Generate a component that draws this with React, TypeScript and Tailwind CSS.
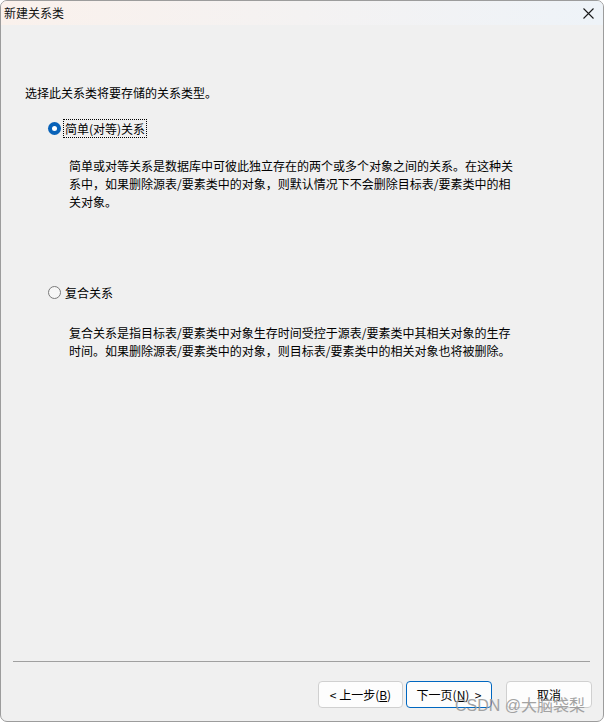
import React from "react";

const font = { fontFamily: '"Noto Sans CJK SC", "Microsoft YaHei", sans-serif' };

export default function App() {
  return (
    <div className="w-[605px] h-[723px] bg-white relative" style={font}>
      <div className="w-[604px] h-[722px] border border-[#9c9c9c] rounded-[7px] bg-[#f0f0f0] flex flex-col overflow-hidden text-[12px] text-black">
        {/* title bar */}
        <div className="h-[24px] shrink-0 flex items-center justify-between pl-[3px] pr-[9px] bg-gradient-to-r from-[#faf1ec] to-[#eef3f8]">
          <span className="leading-[14px] text-[12px] text-[#111]">新建关系类</span>
          <svg width="11" height="11" viewBox="0 0 11 11">
            <path d="M0.5 0.5 L10.5 10.5 M10.5 0.5 L0.5 10.5" stroke="#1a1a1a" strokeWidth="1.1" />
          </svg>
        </div>

        {/* body */}
        <div className="flex-1 flex flex-col">
          <div className="pl-[24px] mt-[59px] leading-[18px]">选择此关系类将要存储的关系类型。</div>

          <div className="flex items-center pl-[47px] mt-[16px] h-[20px]">
            <div className="w-[13px] h-[13px] rounded-full bg-[#0862b8] flex items-center justify-center">
              <div className="w-[5px] h-[5px] rounded-full bg-white" />
            </div>
            <div className="ml-[2px] border border-dotted border-black px-[1px] leading-[17px]">简单(对等)关系</div>
          </div>

          <div className="pl-[68px] mt-[19px] w-[520px] leading-[18px]">
            简单或对等关系是数据库中可彼此独立存在的两个或多个对象之间的关系。在这种关系中，如果删除源表/要素类中的对象，则默认情况下不会删除目标表/要素类中的相关对象。
          </div>

          <div className="flex items-center pl-[47px] mt-[71px] h-[20px]">
            <div className="w-[13px] h-[13px] rounded-full border border-[#7a7a7a] bg-[#f6f6f6]" />
            <div className="ml-[3px] px-[1px] leading-[17px]">复合关系</div>
          </div>

          <div className="pl-[68px] mt-[22px] w-[520px] leading-[18px]">
            复合关系是指目标表/要素类中对象生存时间受控于源表/要素类中其相关对象的生存时间。如果删除源表/要素类中的对象，则目标表/要素类中的相关对象也将被删除。
          </div>
        </div>

        {/* footer */}
        <div className="shrink-0">
          <div className="ml-[12px] w-[577px] h-px bg-[#a0a0a0]" />
          <div className="flex justify-end pr-[11px] mt-[19px] mb-[13px]">
            <button className="w-[85px] h-[27px] rounded-[4px] border border-[#d0d0d0] bg-[#fdfdfd] flex items-center justify-center leading-none whitespace-pre">
              {"< 上一步("}<span className="underline">B</span>{")"}
            </button>
            <button className="ml-[3px] w-[86px] h-[27px] rounded-[4px] border border-[#0067c0] bg-[#fdfdfd] flex items-center justify-center leading-none whitespace-pre">
              {"下一页("}<span className="underline">N</span>{")  >"}
            </button>
            <button className="ml-[14px] w-[86px] h-[27px] rounded-[4px] border border-[#d0d0d0] bg-[#fdfdfd] flex items-center justify-center leading-none">
              取消
            </button>
          </div>
        </div>
      </div>

      {/* watermark */}
      <div
        className="absolute left-[455px] top-[696px] text-[16px] leading-[20px] text-[#9a9a9a] opacity-90 whitespace-nowrap"
        style={{ fontFamily: '"Liberation Sans", "Noto Sans CJK SC", sans-serif' }}
      >
        CSDN @大脑袋梨
      </div>
    </div>
  );
}
